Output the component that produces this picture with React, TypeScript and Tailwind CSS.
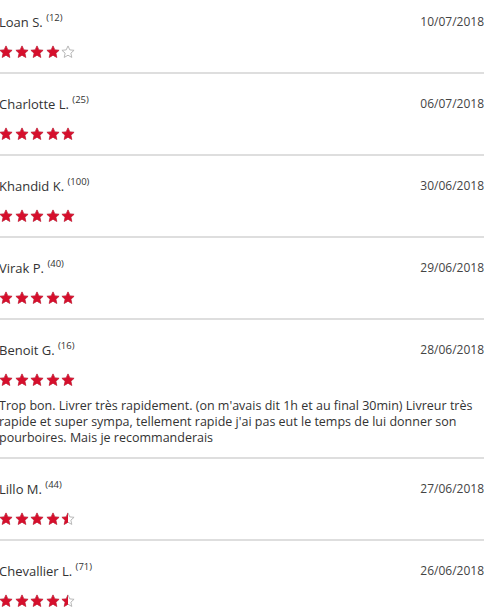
import React from 'react';

type Review = {
  name: string;
  count: number;
  date: string;
  rating: number;
  text?: string;
};

const REVIEWS: Review[] = [
  { name: 'Loan S.', count: 12, date: '10/07/2018', rating: 4 },
  { name: 'Charlotte L.', count: 25, date: '06/07/2018', rating: 5 },
  { name: 'Khandid K.', count: 100, date: '30/06/2018', rating: 5 },
  { name: 'Virak P.', count: 40, date: '29/06/2018', rating: 5 },
  {
    name: 'Benoit G.',
    count: 16,
    date: '28/06/2018',
    rating: 5,
    text: "Trop bon. Livrer très rapidement. (on m'avais dit 1h et au final 30min) Livreur très rapide et super sympa, tellement rapide j'ai pas eut le temps de lui donner son pourboires. Mais je recommanderais",
  },
  { name: 'Lillo M.', count: 44, date: '27/06/2018', rating: 4.5 },
  { name: 'Chevallier L.', count: 71, date: '26/06/2018', rating: 4.5 },
];

const STAR = '12,1.6 15.1,8.4 22.4,9.1 16.9,14 18.5,21.3 12,17.5 5.5,21.3 7.1,14 1.6,9.1 8.9,8.4';

const Star = ({ fill }: { fill: 'full' | 'half' | 'empty' }) => (
  <span className="relative block h-[14px] w-[14px]">
    <svg viewBox="0 0 24 24" className="absolute inset-0 h-[14px] w-[14px]">
      <polygon points={STAR} fill="#fff" stroke="#b3b3b3" strokeWidth="1.6" strokeLinejoin="round" />
    </svg>
    {fill !== 'empty' && (
      <span className={`absolute inset-y-0 left-0 overflow-hidden ${fill === 'half' ? 'w-[7px]' : 'w-[14px]'}`}>
        <svg viewBox="0 0 24 24" className="h-[14px] w-[14px]">
          <polygon points={STAR} fill="#d50f2c" stroke="#d50f2c" strokeWidth="1" strokeLinejoin="round" />
        </svg>
      </span>
    )}
  </span>
);

const Stars = ({ rating }: { rating: number }) => (
  <div className="flex h-[14px] items-center gap-[1.5px]">
    {[0, 1, 2, 3, 4].map((i) => (
      <Star key={i} fill={rating >= i + 1 ? 'full' : rating > i ? 'half' : 'empty'} />
    ))}
  </div>
);

export default function App() {
  return (
    <div className="h-[615px] w-[486px] overflow-hidden bg-white font-['Open_Sans',sans-serif] text-[#333]">
      <div className="-mt-2 ml-[-1px] mr-[2px]">
        {REVIEWS.map((r) => (
          <div key={r.name} className="border-b-2 border-[#dedede] pt-[21px] pb-[13px]">
            <div className="flex h-[18px] items-center justify-between leading-[18px]">
              <span className="text-[13px]">
                {r.name}{' '}
                <sup className="relative -top-[6px] text-[9.5px]">({r.count})</sup>
              </span>
              <span className="text-[12px] text-[#444]">{r.date}</span>
            </div>
            <div className="mt-[14px]">
              <Stars rating={r.rating} />
            </div>
            {r.text && (
              <p className="mt-[11px] -mb-[2px] pr-1 text-[12.5px] leading-4">{r.text}</p>
            )}
          </div>
        ))}
      </div>
    </div>
  );
}
